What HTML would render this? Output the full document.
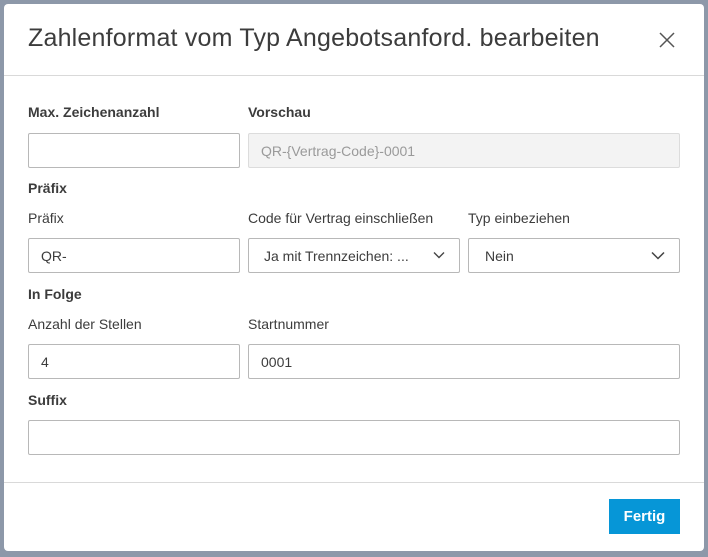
<!DOCTYPE html>
<html><head><meta charset="utf-8"><style>
*{box-sizing:border-box;margin:0;padding:0}
body{width:708px;height:557px;background:#8d98a9;font-family:"Liberation Sans Narrow","Liberation Sans",sans-serif;color:#3c3c3c;position:relative;overflow:hidden}
.dlg{position:absolute;left:4px;top:4px;width:700px;height:547px;background:#fff;border-radius:4px}
.t{position:absolute;left:24px;top:20px;font-size:25px;color:#3c3c3c;font-family:"Liberation Sans Narrow","Liberation Sans",sans-serif;letter-spacing:0.2px}
.x{position:absolute;left:655px;top:28px}
.hr{position:absolute;left:0;width:700px;height:1px;background:#d9d9d9}
.l{position:absolute;font-size:14px;color:#3c3c3c}
.b{font-weight:bold}
.i{position:absolute;height:35px;border:1px solid #b8b8b8;border-radius:2px;font-size:14px;padding:9px 12px;color:#3c3c3c}
.ro{background:#f3f3f3;border-color:#dcdcdc;color:#9a9a9a}
.chev{position:absolute;right:14px;top:12px}
.btn{position:absolute;left:605px;top:495px;width:71px;height:35px;background:#0696d7;color:#fff;font-size:15px;text-align:center;line-height:35px;font-weight:bold}
</style></head><body>
<div class="dlg">
<div class="t">Zahlenformat vom Typ Angebotsanford. bearbeiten</div>
<svg class="x" width="16" height="16" viewBox="0 0 16 16"><path d="M1 1L15 15M15 1L1 15" stroke="#555" stroke-width="1.5"/></svg>
<div class="hr" style="top:71px"></div>
<div class="l b" style="left:24px;top:100px">Max. Zeichenanzahl</div>
<div class="l b" style="left:244px;top:100px">Vorschau</div>
<div class="i" style="left:24px;top:129px;width:212px"></div>
<div class="i ro" style="left:244px;top:129px;width:432px">QR-{Vertrag-Code}-0001</div>
<div class="l b" style="left:24px;top:176px">Präfix</div>
<div class="l" style="left:24px;top:206px">Präfix</div>
<div class="l" style="left:244px;top:206px">Code für Vertrag einschließen</div>
<div class="l" style="left:464px;top:206px">Typ einbeziehen</div>
<div class="i" style="left:24px;top:234px;width:212px">QR-</div>
<div class="i" style="left:244px;top:234px;width:212px;padding-left:15px">Ja mit Trennzeichen: ...<svg class="chev" width="12" height="8" viewBox="0 0 12 8"><path d="M1 1.5L6 6.5L11 1.5" stroke="#444" stroke-width="1.4" fill="none"/></svg></div>
<div class="i" style="left:464px;top:234px;width:212px;padding-left:16px">Nein<svg class="chev" width="14" height="9" viewBox="0 0 14 9"><path d="M1 1.5L7 7.5L13 1.5" stroke="#444" stroke-width="1.5" fill="none"/></svg></div>
<div class="l b" style="left:24px;top:282px">In Folge</div>
<div class="l" style="left:24px;top:312px">Anzahl der Stellen</div>
<div class="l" style="left:244px;top:312px">Startnummer</div>
<div class="i" style="left:24px;top:340px;width:212px">4</div>
<div class="i" style="left:244px;top:340px;width:432px">0001</div>
<div class="l b" style="left:24px;top:388px">Suffix</div>
<div class="i" style="left:24px;top:416px;width:652px"></div>
<div class="hr" style="top:478px"></div>
<div class="btn">Fertig</div>
</div>
</body></html>
